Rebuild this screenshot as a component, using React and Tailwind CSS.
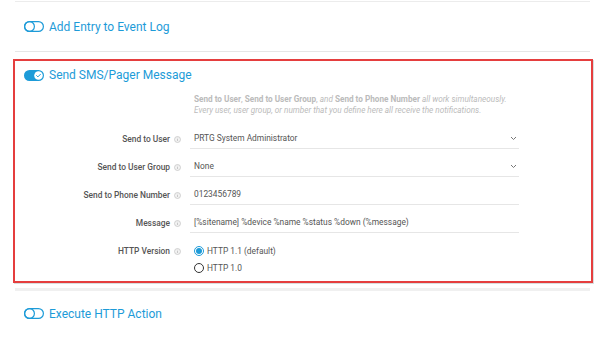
import React from 'react';

const Toggle = ({ on }) =>
  on ? (
    <svg width="20" height="11" viewBox="0 0 20 11" className="shrink-0">
      <rect x="0" y="0" width="20" height="11" rx="5.5" fill="#1d9bd8" />
      <circle cx="14.5" cy="5.5" r="4.3" fill="#fff" />
      <path d="M12.6 5.6l1.3 1.3 2.5-2.6" fill="none" stroke="#1d9bd8" strokeWidth="1" strokeLinecap="round" strokeLinejoin="round" />
    </svg>
  ) : (
    <svg width="20" height="11" viewBox="0 0 20 11" className="shrink-0">
      <rect x="0.6" y="0.6" width="18.8" height="9.8" rx="4.9" fill="none" stroke="#1d9bd8" strokeWidth="1.2" />
      <circle cx="5.5" cy="5.5" r="4.9" fill="none" stroke="#1d9bd8" strokeWidth="1.2" />
    </svg>
  );

const Info = () => (
  <svg width="7" height="7" viewBox="0 0 7 7" className="ml-[4px] shrink-0">
    <circle cx="3.5" cy="3.5" r="3" fill="#f2f2f2" stroke="#c8c8c8" strokeWidth="0.8" />
    <path d="M3.5 3v2" stroke="#bdbdbd" strokeWidth="0.8" />
    <circle cx="3.5" cy="2" r="0.4" fill="#bdbdbd" />
  </svg>
);

const Chevron = () => (
  <svg width="7" height="5" viewBox="0 0 7 5" className="shrink-0">
    <path d="M1 1l2.5 2.5L6 1" fill="none" stroke="#777" strokeWidth="1" />
  </svg>
);

const Heading = ({ on, title }) => (
  <div className="flex items-center gap-[5px] pl-[9px]">
    <Toggle on={on} />
    <span className="text-[12px] text-[#1d9bd8] leading-none">{title}</span>
  </div>
);

const Row = ({ label, children, select, plain }) => (
  <div className="flex items-start">
    <div className="w-[166px] h-[20px] flex items-center justify-end text-[8.4px] font-medium text-[#555]">
      {label}
      <Info />
    </div>
    <div className="w-[9px]" />
    {plain ? (
      children
    ) : (
      <div className="w-[329px] h-[20px] flex items-center justify-between pl-[4px] pr-[2px] border-b border-[#e6e6e6] text-[8.4px] text-[#555]">
        <span>{children}</span>
        {select && <Chevron />}
      </div>
    )}
  </div>
);

export default function App() {
  return (
    <div className="w-[602px] h-[338px] bg-white overflow-hidden" style={{ fontFamily: 'Roboto, "Liberation Sans", sans-serif' }}>
      <div className="pl-[15px] pr-[12px]">
        <div className="mt-px h-px bg-[#ececec]" />
        <div className="h-[49px] flex items-center">
          <Heading title="Add Entry to Event Log" />
        </div>
        <div className="h-px bg-[#e6e6e6]" />

        <div className="mt-[7px] -ml-[2px] -mr-[3px] h-[224px] border-2 border-[#e53e3e] shadow-[1px_1px_0_#d9dede]">
          <div className="h-[28px] flex items-center">
            <Heading on title="Send SMS/Pager Message" />
          </div>
          <div className="mt-[5px] pl-[179px] text-[8.2px] leading-[11px] text-[#bbb]">
            <div>
              <b>Send to User</b>, <b>Send to User Group</b>, <i>and</i> <b>Send to Phone Number</b> <i>all work simultaneously.</i>
            </div>
            <div className="italic">Every user, user group, or number that you define here all receive the notifications.</div>
          </div>
          <div className="mt-[13px] flex flex-col gap-[8px]">
            <Row label="Send to User" select>PRTG System Administrator</Row>
            <Row label="Send to User Group" select>None</Row>
            <Row label="Send to Phone Number">0123456789</Row>
            <Row label="Message">[%sitename] %device %name %status %down (%message)</Row>
            <Row label="HTTP Version" plain>
              <div className="flex flex-col gap-[4px] pt-[4px] pl-[4px] text-[8.4px] text-[#555]">
                <label className="flex items-center gap-[3px]">
                  <span className="w-[10px] h-[10px] rounded-full border border-[#1d9bd8] flex items-center justify-center">
                    <span className="w-[6px] h-[6px] rounded-full bg-[#1d9bd8]" />
                  </span>
                  HTTP 1.1 (default)
                </label>
                <label className="flex items-center gap-[3px]">
                  <span className="w-[10px] h-[10px] rounded-full border border-[#333]" />
                  HTTP 1.0
                </label>
              </div>
            </Row>
          </div>
        </div>

        <div className="mt-[5px] h-[3px] bg-[#f0f0f0]" />
        <div className="h-[45px] flex items-center">
          <Heading title="Execute HTTP Action" />
        </div>
      </div>
    </div>
  );
}
